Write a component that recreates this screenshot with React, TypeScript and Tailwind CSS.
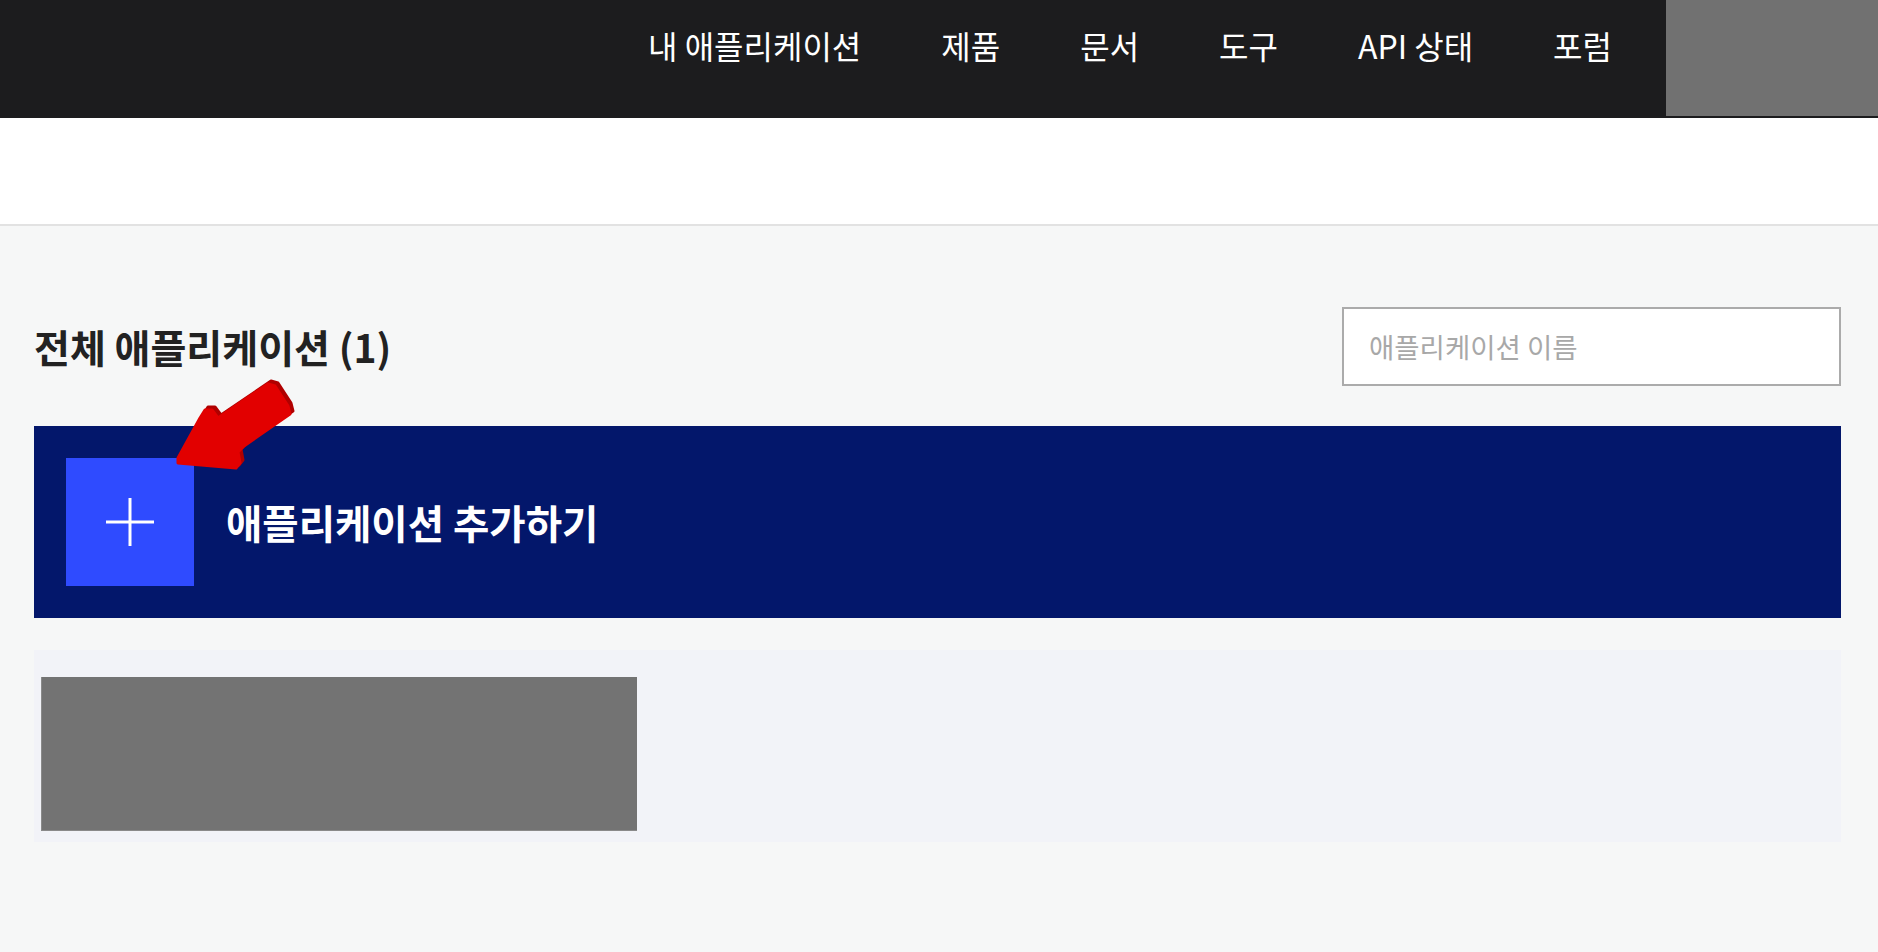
import React from "react";

const font = { fontFamily: '"Noto Sans CJK KR", "Noto Sans", sans-serif' };

export default function App() {
  const nav = ["내 애플리케이션", "제품", "문서", "도구", "API 상태", "포럼"];
  return (
    <div className="relative min-h-[952px] w-full bg-[#f6f7f7]" style={font}>
      <header className="flex h-[118px] justify-end bg-[#1c1c1e]">
        <nav className="flex h-[90px] items-center gap-[80px] pr-[54px]">
          {nav.map((n) => (
            <a key={n} className="text-[32px] leading-none text-white whitespace-nowrap">
              {n}
            </a>
          ))}
        </nav>
        <div className="h-[116px] w-[212px] bg-[#717171]" />
      </header>
      <div className="h-[108px] border-b-2 border-[#e2e2e2] bg-white" />
      <main className="pl-[34px] pr-[37px] pt-[81px] pb-[40px]">
        <div className="flex items-center justify-between">
          <h1 className="text-[39px] font-bold leading-none text-[#222]">전체 애플리케이션 (1)</h1>
          <div className="flex h-[79px] w-[499px] items-center border-2 border-[#ababab] bg-white pl-[25px]">
            <span className="text-[27.5px] leading-none text-[#a8a8a8]">애플리케이션 이름</span>
          </div>
        </div>
        <div className="mt-[40px] flex h-[192px] items-center gap-[32px] bg-[#03176b] p-[32px]">
          <div className="flex h-[128px] w-[128px] items-center justify-center bg-[#2f4bff]">
            <svg width="48" height="48" viewBox="0 0 48 48">
              <line x1="24" y1="0" x2="24" y2="48" stroke="white" strokeWidth="3" />
              <line x1="0" y1="24" x2="48" y2="24" stroke="white" strokeWidth="3" />
            </svg>
          </div>
          <span className="text-[39.5px] font-bold leading-none text-white">애플리케이션 추가하기</span>
        </div>
        <div className="mt-[32px] h-[192px] bg-[#f2f3f8] pl-[7px] pt-[27px]">
          <div className="h-[154px] w-[596px] border-l border-b border-[#8a8a8a] bg-[#737373]" />
        </div>
      </main>
      <svg
        className="absolute left-[168px] top-[372px]"
        width="134"
        height="104"
        viewBox="168 372 134 104"
      >
        <polygon
          transform="translate(3,-3)"
          points="178,463 236,468 240,463 238,452 244,446 290,414 288,406 275,386 268,384 218,418 212,410 205,410 200,418 178,458"
          fill="#b00000"
          stroke="#b00000"
          strokeWidth="3"
          strokeLinejoin="round"
        />
        <polygon
          points="178,463 236,468 240,463 238,452 244,446 290,414 288,406 275,386 268,384 218,418 212,410 205,410 200,418 178,458"
          fill="#e20000"
          stroke="#e20000"
          strokeWidth="3"
          strokeLinejoin="round"
        />
      </svg>
    </div>
  );
}
